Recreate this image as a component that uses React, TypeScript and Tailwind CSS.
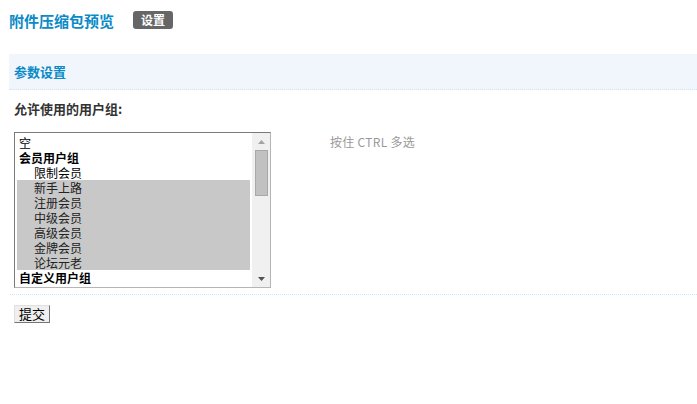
import React from "react";

const font = { fontFamily: '"Noto Sans CJK SC", "Liberation Sans", sans-serif' };

type Opt = { label: string; group?: boolean; indent?: boolean; selected?: boolean };

const options: Opt[] = [
  { label: "空" },
  { label: "会员用户组", group: true },
  { label: "限制会员", indent: true },
  { label: "新手上路", indent: true, selected: true },
  { label: "注册会员", indent: true, selected: true },
  { label: "中级会员", indent: true, selected: true },
  { label: "高级会员", indent: true, selected: true },
  { label: "金牌会员", indent: true, selected: true },
  { label: "论坛元老", indent: true, selected: true },
  { label: "自定义用户组", group: true },
];

export default function App() {
  return (
    <div className="w-[697px] h-[404px] bg-white pl-[9px] text-[12px] text-[#333]" style={font}>
      <div className="h-[40px] flex items-center">
        <h3 className="text-[15px] font-bold text-[#0a8ac6] leading-none">附件压缩包预览</h3>
        <span className="ml-[19px] h-[18px] px-[8px] rounded-[3px] bg-[#666] text-white font-bold text-[12px] leading-[18px]">
          设置
        </span>
      </div>

      <div className="mt-[14px] h-[36px] bg-[#f0f6fc] border-b border-dotted border-[#cfe3f3] flex items-center pl-[5px]">
        <span className="text-[13px] font-bold text-[#0a8ac6]">参数设置</span>
      </div>

      <div className="pl-[5px] pt-[10px] leading-[17px] text-[13px] font-bold text-[#333]">允许使用的用户组:</div>

      <div className="pl-[5px] mt-[15px] flex">
        <div className="w-[257px] h-[156px] border border-t-[#7a7a7a] border-l-[#7a7a7a] border-r-[#b5b5b5] border-b-[#b5b5b5] bg-white flex">
          <div className="flex-1 pt-[2px] pl-[2px] text-black">
            {options.map((o) => (
              <div
                key={o.label}
                className={
                  "h-[15px] leading-[15px] text-[12px] overflow-visible " +
                  (o.group ? "font-bold pl-[2px] " : "") +
                  (o.indent ? "pl-[17px] " : "") +
                  (!o.group && !o.indent ? "pl-[2px] " : "") +
                  (o.selected ? "bg-[#c8c8c8] text-[#222]" : "")
                }
              >
                {o.label}
              </div>
            ))}
          </div>
          <div className="w-[18px] ml-[2px] bg-[#f0f0f0] flex flex-col items-center">
            <div className="h-[17px] flex items-center justify-center">
              <svg width="7" height="4" viewBox="0 0 7 4">
                <polygon points="3.5,0 7,4 0,4" fill="#a3a3a3" />
              </svg>
            </div>
            <div className="w-[13px] h-[46px] bg-[#c1c1c1] border border-[#a8a8a8]" />
            <div className="flex-1" />
            <div className="h-[17px] flex items-center justify-center">
              <svg width="7" height="4" viewBox="0 0 7 4">
                <polygon points="0,0 7,0 3.5,4" fill="#505050" />
              </svg>
            </div>
          </div>
        </div>
        <div className="ml-[59px] pt-[2px] leading-[15px] text-[#999] text-[12px] tracking-[0.3px]">按住 CTRL 多选</div>
      </div>

      <div className="mt-[6px] ml-[1px] border-b border-dotted border-[#cfe3f3]" />

      <div className="pl-[5px] mt-[10px]">
        <button className="h-[18px] w-[36px] bg-[#efefef] border border-t-[#e0e0e0] border-l-[#e0e0e0] border-r-[#767676] border-b-[#767676] text-[13px] leading-[14px] text-black">
          提交
        </button>
      </div>
    </div>
  );
}
